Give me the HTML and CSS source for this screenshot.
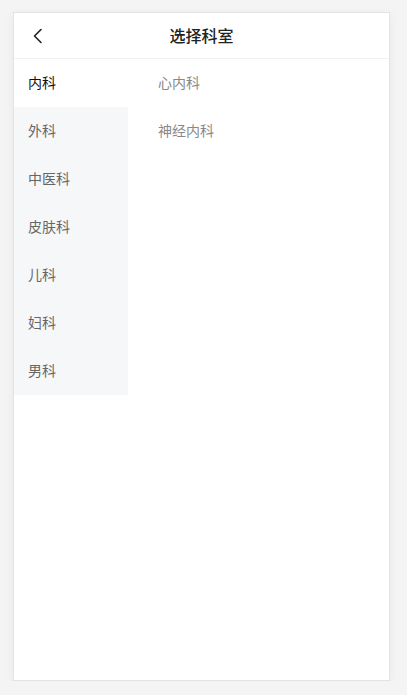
FILE: index.html
```html
<!DOCTYPE html>
<html lang="zh-CN">

<head>
    <meta charset="UTF-8">
    <meta name="viewport" content="width=device-width, initial-scale=1.0">
    <title>选择科室</title>
    <link rel="stylesheet" href="styles.css">
</head>

<body>
    <div class="page">
        <!-- Header -->
        <header class="nav-bar">
            <span class="back-btn">
                <svg width="12" height="16" viewBox="0 0 12 16" fill="none">
                    <path d="M9 1.5 L2.5 8 L9 14.5" stroke="#222" stroke-width="1.6" stroke-linecap="round" stroke-linejoin="round" />
                </svg>
            </span>
            <h1>选择科室</h1>
        </header>

        <div class="dept-body">
            <ul class="dept-side">
                <li class="active">内科</li>
                <li>外科</li>
                <li>中医科</li>
                <li>皮肤科</li>
                <li>儿科</li>
                <li>妇科</li>
                <li>男科</li>
            </ul>
            <ul class="dept-sub">
                <li>心内科</li>
                <li>神经内科</li>
            </ul>
        </div>
    </div>
</body>

</html>
```

FILE: styles.css
```css
/* Reset Styles */
* {
    margin: 0;
    padding: 0;
    box-sizing: border-box;
}

body {
    font-family: "Noto Sans CJK SC", "Noto Sans", sans-serif;
    background-color: #f3f4f3;
    padding: 12px 17px 0 13px;
}

ul {
    list-style: none;
}

/* Page card */
.page {
    height: 669px;
    background: #fff;
    border: 1px solid #e2e3e2;
    box-shadow: 0 2px 10px rgba(0, 0, 0, 0.05);
    display: flex;
    flex-direction: column;
}

/* Header */
.nav-bar {
    height: 46px;
    padding-bottom: 2px;
    border-bottom: 1px solid #f1f2f2;
    display: flex;
    align-items: center;
    justify-content: center;
    position: relative;
}

.nav-bar h1 {
    font-size: 16px;
    font-weight: 500;
    color: #222;
}

.back-btn {
    position: absolute;
    left: 18px;
    top: 15px;
    display: flex;
}

/* Department lists */
.dept-body {
    display: flex;
    align-items: flex-start;
}

.dept-side {
    width: 114px;
    background-color: #f6f7f9;
}

.dept-side li,
.dept-sub li {
    height: 48px;
    line-height: 46px;
    font-size: 14px;
}

.dept-side li {
    padding-left: 14px;
    color: #666;
}

.dept-side li.active {
    background-color: #fff;
    color: #111;
}

.dept-sub {
    flex: 1;
    padding-left: 30px;
}

.dept-sub li {
    color: #888;
}
```
